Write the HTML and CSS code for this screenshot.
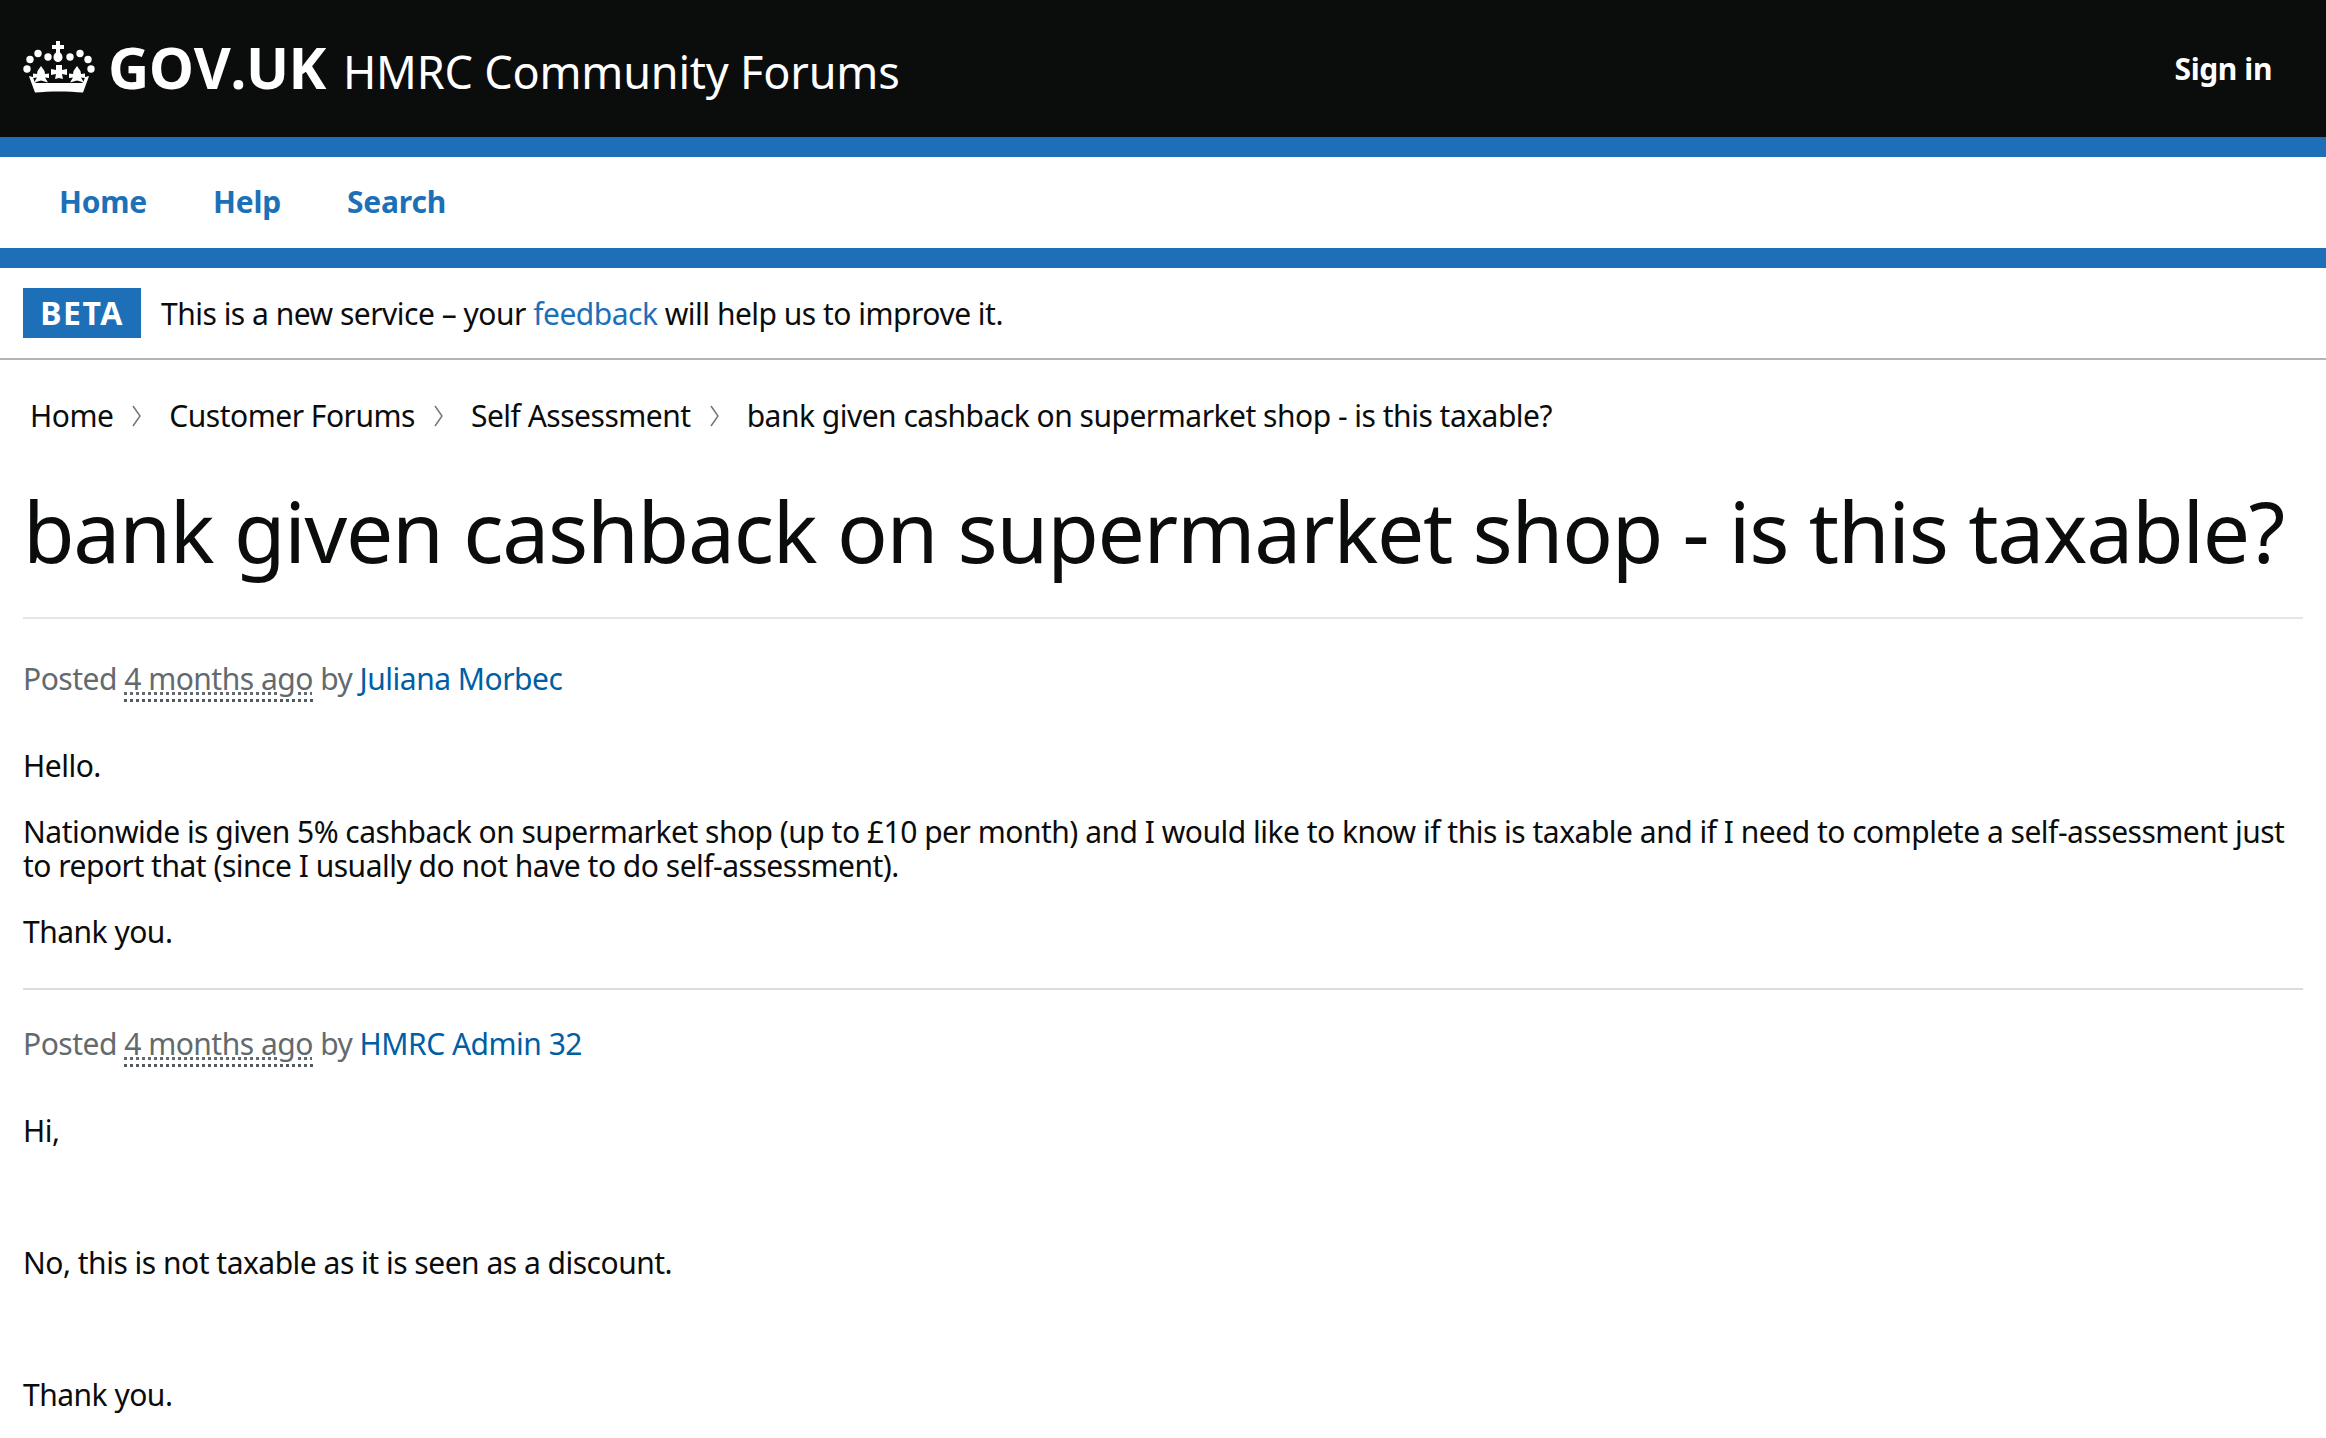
FILE: index.html
```html
<!DOCTYPE html>
<html lang="en">
<head>
    <meta charset="UTF-8">
    <title>bank given cashback on supermarket shop - is this taxable?</title>
    <link rel="stylesheet" href="styles.css">
</head>
<body>
    <header class="site-header">
        <a href="#" class="logo">
            <svg class="crown" viewBox="0 0 72 52" width="72" height="52" fill="#fff">
                <path d="M33 0h4v4h4v4h-4v3.500c1.800 1 2.500 3 2.500 5 0 2-1.500 4.500-4.500 4.500s-4.500-2.500-4.500-4.500c0-2 .7-4 2.500-5V8h-4V4h4z"/>
                <circle cx="15" cy="12.500" r="3.700"/>
                <circle cx="25" cy="16" r="3.700"/>
                <circle cx="47" cy="16" r="3.700"/>
                <circle cx="57" cy="12.500" r="3.700"/>
                <circle cx="7" cy="18.500" r="3.700"/>
                <circle cx="65" cy="18.500" r="3.700"/>
                <circle cx="4" cy="28" r="3.700"/>
                <circle cx="68" cy="28" r="3.700"/>
                <path d="M33 24h6v5l5-1v6l-5-1 1 5 -4-1-4 1 1-5-5 1v-6l5 1z"/>
                <path d="M18 25l3.500 5 .5 3 4-.5v4.500l-4-.5 3 5-7-2-7 2 3-5-4 .5v-4.500l4 .5.500-3z"/>
                <path d="M54 25l-3.500 5-.5 3-4-.5v4.500l4-.5-3 5 7-2 7 2-3-5 4 .5v-4.500l-4 .5-.5-3z"/>
                <path d="M6 35l4 1c1 3 1 5 3 6h46c2-1 2-3 3-6l4-1-1 3-5 13.500c-14-1.500-34-1.500-48 0l-5-13.500z"/>
            </svg>
            <span class="logo-text">GOV.UK</span>
            <span class="service-name">HMRC Community Forums</span>
        </a>
        <a href="#" class="sign-in">Sign in</a>
    </header>

    <nav class="main-nav">
        <a href="#">Home</a>
        <a href="#">Help</a>
        <a href="#">Search</a>
    </nav>

    <div class="beta-banner">
        <strong class="beta-tag">BETA</strong>
        <span>This is a new service – your <a href="#">feedback</a> will help us to improve it.</span>
    </div>

    <div class="breadcrumbs">
        <a href="#">Home</a>
        <svg class="chevron" viewBox="0 0 9 22" width="9" height="22"><path d="M1 1l7 10-7 10" /></svg>
        <a href="#">Customer Forums</a>
        <svg class="chevron" viewBox="0 0 9 22" width="9" height="22"><path d="M1 1l7 10-7 10" /></svg>
        <a href="#">Self Assessment</a>
        <svg class="chevron" viewBox="0 0 9 22" width="9" height="22"><path d="M1 1l7 10-7 10" /></svg>
        <span>bank given cashback on supermarket shop - is this taxable?</span>
    </div>

    <main class="content">
        <h1>bank given cashback on supermarket shop - is this taxable?</h1>

        <article class="post">
            <div class="post-meta">Posted <abbr>4 months ago</abbr> by <a href="#">Juliana Morbec</a></div>
            <p>Hello.</p>
            <p>Nationwide is given 5% cashback on supermarket shop (up to £10 per month) and I would like to know if this is taxable and if I need to complete a self-assessment just to report that (since I usually do not have to do self-assessment).</p>
            <p>Thank you.</p>
        </article>

        <article class="post">
            <div class="post-meta">Posted <abbr>4 months ago</abbr> by <a href="#">HMRC Admin 32</a></div>
            <p>Hi,</p>
            <p>&nbsp;</p>
            <p>No, this is not taxable as it is seen as a discount.</p>
            <p>&nbsp;</p>
            <p>Thank you.</p>
        </article>
    </main>
</body>
</html>
```

FILE: styles.css
```css
html, body {
    height: 1438px;
    overflow: hidden;
}

body {
    font-family: "Noto Sans", sans-serif;
    margin: 0;
    padding: 0;
    background-color: #fff;
    color: #0b0c0c;
    font-size: 30px;
    letter-spacing: -0.5px;
}

a {
    text-decoration: none;
}

.site-header {
    display: flex;
    justify-content: space-between;
    align-items: center;
    height: 137px;
    padding: 0 54px 0 23px;
    background-color: #0b0c0c;
    border-bottom: 20px solid #1d70b8;
}

.logo {
    display: flex;
    align-items: baseline;
    color: #fff;
    margin-top: -4px;
}

.crown {
    align-self: center;
    margin-right: 13px;
}

.logo-text {
    font-family: "Open Sans", sans-serif;
    font-size: 57px;
    font-weight: 700;
    margin-right: 17px;
}

.service-name {
    font-size: 45px;
    letter-spacing: -0.2px;
}

.sign-in {
    color: #fff;
    font-size: 30px;
    font-weight: 700;
    letter-spacing: -0.4px;
}

.main-nav {
    display: flex;
    align-items: center;
    gap: 66px;
    height: 91px;
    padding-left: 59px;
    border-bottom: 20px solid #1d70b8;
}

.main-nav a {
    color: #1d70b8;
    font-size: 30px;
    font-weight: 700;
    letter-spacing: -0.2px;
    margin-top: -3px;
}

.beta-banner {
    display: flex;
    align-items: center;
    height: 90px;
    padding-left: 23px;
    border-bottom: 2px solid #b1b4b6;
}

.beta-banner a {
    color: #1d70b8;
}

.beta-tag {
    display: block;
    width: 118px;
    height: 50px;
    line-height: 50px;
    margin-right: 20px;
    text-align: center;
    background-color: #1d70b8;
    color: #fff;
    font-size: 32px;
    letter-spacing: 1.5px;
}

.breadcrumbs {
    display: flex;
    align-items: center;
    padding: 38px 0 0 30px;
    line-height: 36px;
}

.breadcrumbs a {
    color: #0b0c0c;
}

.chevron {
    margin: 0 28px 0 19px;
    fill: none;
    stroke: #6f777b;
    stroke-width: 1.5;
}

.content {
    padding: 0 23px;
}

h1 {
    font-size: 84px;
    font-weight: 400;
    line-height: 120px;
    letter-spacing: -1.3px;
    margin: 37px 0 0;
    padding-bottom: 26px;
    border-bottom: 2px solid #e5e5e5;
    color: #0b0c0c;
    white-space: nowrap;
}

.post {
    padding-top: 42px;
    padding-bottom: 7px;
    border-bottom: 2px solid #dcdcdc;
}

.post + .post {
    padding-top: 36px;
    border-bottom: none;
}

.post-meta {
    color: #626a6e;
    line-height: 36px;
    margin-bottom: 52px;
}

.post-meta a {
    color: #005ea5;
}

abbr {
    border-bottom: 3px dotted #505a5f;
    text-decoration: underline dotted;
}

.post p {
    margin: 0 0 32px;
    line-height: 34px;
}
```
